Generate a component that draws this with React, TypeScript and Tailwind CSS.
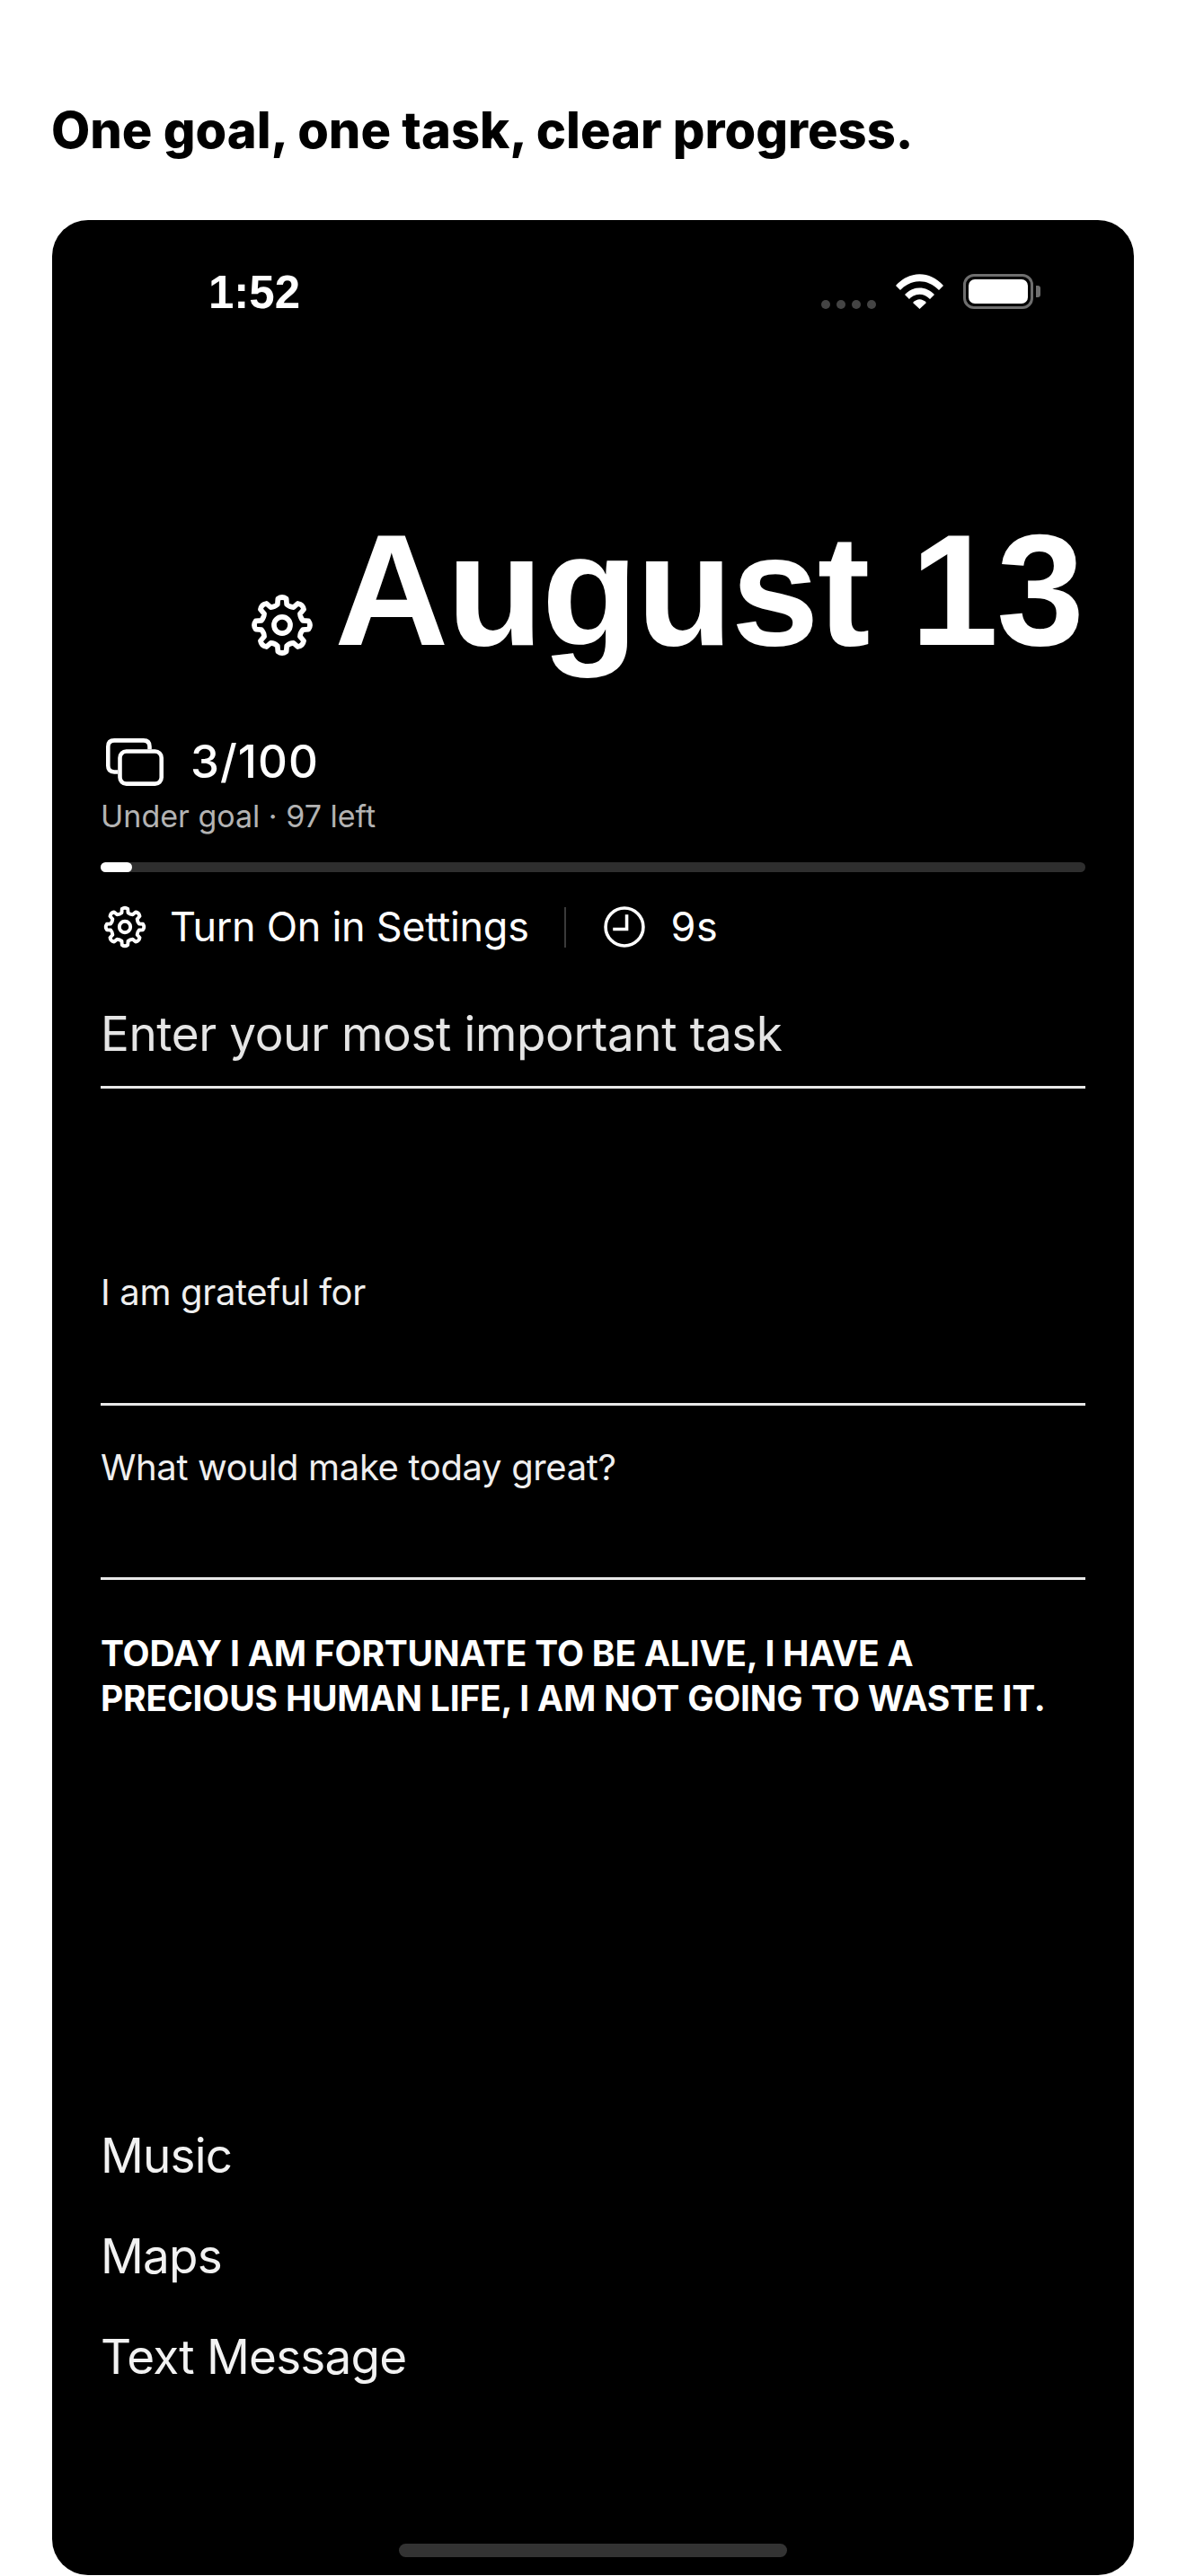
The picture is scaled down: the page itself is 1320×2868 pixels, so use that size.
import React from 'react';

// rounded-ish gear outline, teeth evenly spaced around the centre
const gearPath = (teeth: number) => {
  const pts: string[] = [];
  const step = (Math.PI * 2) / teeth;
  for (let i = 0; i < teeth; i++) {
    const a = i * step - Math.PI / 2;
    const p = (r: number, o: number) =>
      `${(12 + r * Math.cos(a + o * step)).toFixed(2)} ${(12 + r * Math.sin(a + o * step)).toFixed(2)}`;
    pts.push(
      `${i === 0 ? 'M' : 'L'}${p(8.1, -0.28)} L${p(10.2, -0.2)} Q${p(11.2, 0)} ${p(10.2, 0.2)} L${p(8.1, 0.28)} Q${p(7.5, 0.5)} ${p(8.1, 0.72)}`,
    );
  }
  return pts.join(' ') + ' Z';
};

const Gear = ({ className }: { className: string }) => (
  <svg viewBox="0 0 24 24" fill="none" stroke="currentColor" strokeWidth="1.95" strokeLinejoin="round" className={className}>
    <path d={gearPath(8)} />
    <circle cx="12" cy="12" r="3.1" />
  </svg>
);

const Wifi = () => (
  <svg viewBox="0 0 53 39" fill="white" className="w-[53px] h-[39px]">
    <path d="M0 13 C15 -4 38 -4 53 13 L48 18 C35 5 18 5 5 18 Z" />
    <path d="M10 23 C19 13 34 13 43 23 L38 28 C31 21 22 21 15 28 Z" />
    <path d="M19 32 C24 27 29 27 34 32 L26.5 39 Z" />
  </svg>
);

const Battery = () => (
  <div className="flex items-center gap-[3px]">
    <div className="w-[78px] h-[39px] rounded-[12px] border-[3px] border-[#6e6e6e] p-[3px]">
      <div className="w-full h-full rounded-[7px] bg-white" />
    </div>
    <div className="w-[5px] h-[13px] rounded-r-[3px] bg-[#6e6e6e]" />
  </div>
);

const Line = () => <div className="h-[3px] bg-[#e8e8e8]" />;

export default function App() {
  return (
    <div className="w-[1320px] h-[2868px] overflow-hidden bg-white font-['Inter',sans-serif]">
      <h1 className="pl-[57px] pt-[111px] h-[245px] text-[56px] leading-[68px] font-extrabold text-black">
        One goal, one task, clear progress.
      </h1>

      <div className="relative mx-[58px] h-[2622px] rounded-[40px] bg-black text-white px-[54px]">
        {/* status bar */}
        <div className="h-[160px] -mx-[54px] pl-[174px] pr-[104px] flex items-start justify-between">
          <span className="mt-[52px] text-[51px] leading-[58px] font-bold font-['Liberation_Sans',sans-serif]">1:52</span>
          <div className="mt-[60px] flex items-end">
            <div className="flex gap-[7px] mr-[22px]">
              <span className="w-[10px] h-[10px] rounded-full bg-[#444]" />
              <span className="w-[10px] h-[10px] rounded-full bg-[#444]" />
              <span className="w-[10px] h-[10px] rounded-full bg-[#444]" />
              <span className="w-[10px] h-[10px] rounded-full bg-[#444]" />
            </div>
            <Wifi />
            <div className="ml-[22px]"><Battery /></div>
          </div>
        </div>

        {/* date */}
        <div className="mt-[157px] h-[190px] flex items-end justify-end gap-[23px] pr-[3px]">
          <Gear className="w-[70px] h-[70px] mb-[21px]" />
          <span className="text-[176px] leading-[190px] font-bold tracking-[-2px] font-['Liberation_Sans',sans-serif]">August 13</span>
        </div>

        {/* counter */}
        <div className="mt-[67px] flex items-center gap-[30px] pl-[6px] h-[58px]">
          <svg viewBox="0 0 63 52" fill="none" stroke="white" strokeWidth="4.5" className="w-[64px] h-[53px]">
            <rect x="15.25" y="14.25" width="45.5" height="35.5" rx="7" />
            <path d="M13 36.75 H9 C4.5 36.75 2.25 34.5 2.25 30 V9 C2.25 4.5 4.5 2.25 9 2.25 H41 C45.5 2.25 47.75 4.5 47.75 9 V12" />
          </svg>
          <span className="text-[51px] leading-[58px] font-medium tracking-[1px]">3/100</span>
        </div>
        <div className="mt-[12px] text-[34px] leading-[40px] text-[#b3b3b3]">Under goal · 97 left</div>

        {/* progress */}
        <div className="mt-[31px] h-[11px] rounded-full bg-[#2e2e2e]">
          <div className="h-full w-[35px] rounded-full bg-white" />
        </div>

        {/* settings + timer */}
        <div className="mt-[36px] h-[50px] flex items-center text-[45px] leading-[50px] tracking-[-0.3px]">
          <Gear className="w-[48px] h-[48px] ml-[3px]" />
          <span className="ml-[26px]">Turn On in Settings</span>
          <div className="ml-[39px] w-[2px] h-[45px] bg-[#3a3a3a]" />
          <svg viewBox="0 0 45 45" fill="none" stroke="white" strokeWidth="3.5" className="ml-[42px] w-[46px] h-[46px]">
            <circle cx="22.5" cy="22.5" r="20.5" />
            <path d="M25 9 V25 H10" />
          </svg>
          <span className="ml-[29px] tracking-[0.4px]">9s</span>
        </div>

        {/* task */}
        <div className="mt-[60px] text-[53px] leading-[68px] tracking-[-0.4px] text-[#e5e5e5]">Enter your most important task</div>
        <div className="mt-[24px]"><Line /></div>

        <div className="mt-[203px] text-[40px] leading-[48px] tracking-[-0.35px] text-[#efefef]">I am grateful for</div>
        <div className="mt-[99px]"><Line /></div>
        <div className="mt-[45px] text-[40px] leading-[48px] tracking-[-0.35px] text-[#efefef]">What would make today great?</div>
        <div className="mt-[98px]"><Line /></div>

        <div className="mt-[57px] text-[39px] leading-[50px] tracking-[-0.2px] font-bold">
          TODAY I AM FORTUNATE TO BE ALIVE, I HAVE A
          <br />
          PRECIOUS HUMAN LIFE, I AM NOT GOING TO WASTE IT.
        </div>

        <div className="mt-[450px] flex flex-col gap-[44px] text-[53px] leading-[68px] tracking-[-0.8px] text-[#f2f2f2]">
          <span>Music</span>
          <span>Maps</span>
          <span>Text Message</span>
        </div>

        <div className="absolute left-[386px] bottom-[20px] w-[432px] h-[15px] rounded-full bg-[#333]" />
      </div>
    </div>
  );
}
